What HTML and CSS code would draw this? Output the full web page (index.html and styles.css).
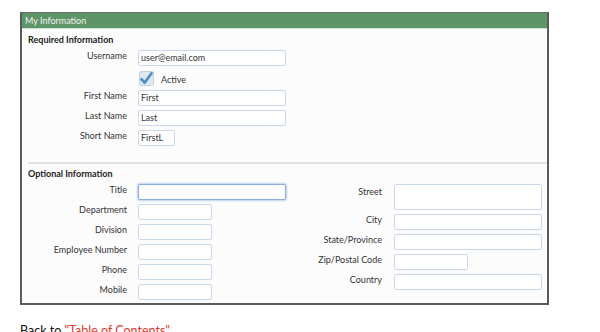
FILE: index.html
```html
<!DOCTYPE html>
<html>
<head>
<meta charset="utf-8">
<link rel="stylesheet" href="styles.css">
</head>
<body>
<div class="page">
  <div class="panel">
    <div class="header">My Information</div>
    <div class="section req">
      <div class="sec-title">Required Information</div>
      <div class="form">
        <label class="lbl">Username</label>
        <div class="field w-long">user@email.com</div>
        <span></span>
        <div class="check-row">
          <svg class="check" width="15" height="15" viewBox="0 0 15 15">
            <rect x="0.5" y="0.5" width="14" height="14" rx="2" fill="#dfe7ef" stroke="#c2cfdc"/>
            <path d="M2.5 8.2 L5.6 11.6 L12.6 2.2" fill="none" stroke="#4d8fc4" stroke-width="2.6" stroke-linecap="round" stroke-linejoin="round"/>
          </svg>
          <span class="check-lbl">Active</span>
        </div>
        <label class="lbl">First Name</label>
        <div class="field w-long">First</div>
        <label class="lbl">Last Name</label>
        <div class="field w-long">Last</div>
        <label class="lbl">Short Name</label>
        <div class="field w-short">FirstL</div>
      </div>
    </div>
    <div class="sep"></div>
    <div class="section opt">
      <div class="sec-title">Optional Information</div>
      <div class="cols">
        <div class="form left">
          <label class="lbl">Title</label>
          <div class="field w-long focus"></div>
          <label class="lbl">Department</label>
          <div class="field w-mid"></div>
          <label class="lbl">Division</label>
          <div class="field w-mid"></div>
          <label class="lbl">Employee Number</label>
          <div class="field w-mid"></div>
          <label class="lbl">Phone</label>
          <div class="field w-mid"></div>
          <label class="lbl">Mobile</label>
          <div class="field w-mid"></div>
        </div>
        <div class="form right">
          <label class="lbl lbl-street">Street</label>
          <div class="field w-long tall"></div>
          <label class="lbl">City</label>
          <div class="field w-long"></div>
          <label class="lbl">State/Province</label>
          <div class="field w-long"></div>
          <label class="lbl">Zip/Postal Code</label>
          <div class="field w-mid"></div>
          <label class="lbl">Country</label>
          <div class="field w-long"></div>
        </div>
      </div>
    </div>
  </div>
  <p class="back">Back to <span class="link">"Table of Contents"</span></p>
</div>
</body>
</html>
```
FILE: styles.css
```css
* { box-sizing: border-box; }
html, body { margin: 0; padding: 0; background: #ffffff; }
body { font-family: Lato, "Open Sans", sans-serif; color: #333333; }
.page { padding: 12px 0 0 20px; }
.panel {
  width: 529px;
  background: #fcfcfc;
  border: 2px solid #5a5a5a;
  border-top: 1px solid #6a6a6a;
  padding-bottom: 3px;
}
.header {
  height: 16px;
  background: #5d9468;
  color: #eef3ee;
  font-size: 9px;
  line-height: 15px;
  padding-left: 3px;
  border-bottom: 1px solid #cddfcf;
}
.section { padding-left: 6px; }
.req { padding-top: 5px; }
.opt { padding-top: 4px; }
.sec-title {
  font-weight: bold;
  font-size: 9px;
  line-height: 11px;
  color: #222222;
  margin-bottom: 5px;
}
.form {
  display: grid;
  grid-template-columns: 99px auto;
  column-gap: 11px;
  row-gap: 4px;
  align-items: start;
  align-content: start;
  justify-items: start;
}
.lbl {
  justify-self: end;
  font-size: 9px;
  line-height: 11px;
  color: #333333;
}
.lbl-street { padding-top: 2px; }
.field {
  height: 16px;
  background: #ffffff;
  border: 1px solid #c9d8ee;
  border-radius: 2px;
  font-size: 9px;
  line-height: 14px;
  padding-left: 2px;
  color: #333333;
}
.w-long { width: 148px; }
.w-mid { width: 74px; }
.w-short { width: 37px; }
.tall { height: 26px; }
.focus {
  border-color: #8aaedb;
  box-shadow: 0 0 2px 1px #bcd3ee;
}
.check-row {
  display: flex;
  align-items: center;
  height: 16px;
  gap: 7px;
  padding-left: 1px;
}
.check { display: block; }
.check-lbl { font-size: 9px; line-height: 11px; padding-top: 3px; }
.sep {
  margin: 16px 0 0 6px;
  height: 2px;
  background: #e3e3e3;
}
.cols { display: flex; align-items: flex-start; }
.left { width: 272px; grid-template-columns: 99px auto; }
.right { grid-template-columns: 82px auto; column-gap: 12px; }
.back {
  margin: 18px 0 0 0;
  font-size: 12.5px;
  line-height: 16px;
  color: #111111;
}
.link { color: #e03a2f; }
```
